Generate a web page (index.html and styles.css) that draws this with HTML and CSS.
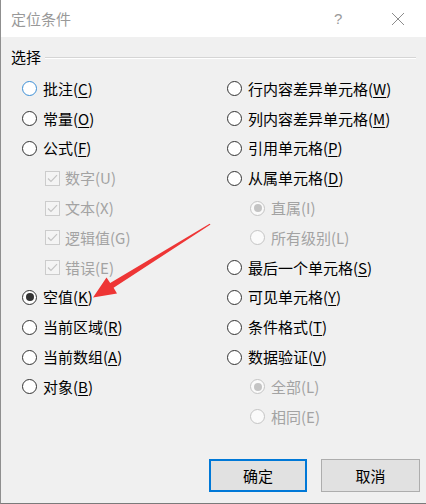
FILE: index.html
```html
<!DOCTYPE html>
<html lang="zh-CN">
<head>
<meta charset="utf-8">
<title>定位条件</title>
<link rel="stylesheet" href="styles.css">
</head>
<body>
<div class="window">
  <div class="titlebar">
    <span class="title">定位条件</span>
    <span class="help">?</span>
    <span class="close">
      <svg width="14" height="14" viewBox="0 0 14 14"><path d="M1 1 L13 13 M13 1 L1 13" stroke="#8c8c8c" stroke-width="1" fill="none"/></svg>
    </span>
  </div>
  <div class="content">
    <div class="group-label"><span>选择</span><div class="groove"></div></div>
    <div class="grid">
      <div class="col">
        <div class="row"><span class="radio focus"></span><span class="lbl">批注(<u>C</u>)</span></div>
        <div class="row"><span class="radio"></span><span class="lbl">常量(<u>O</u>)</span></div>
        <div class="row"><span class="radio"></span><span class="lbl">公式(<u>F</u>)</span></div>
        <div class="row sub"><span class="check"><svg width="15" height="15" viewBox="0 0 15 15"><path d="M3 7.5 L6 10.5 L12 4.2" stroke="#c4c4c4" stroke-width="1.2" fill="none"/></svg></span><span class="lbl dis">数字(U)</span></div>
        <div class="row sub"><span class="check"><svg width="15" height="15" viewBox="0 0 15 15"><path d="M3 7.5 L6 10.5 L12 4.2" stroke="#c4c4c4" stroke-width="1.2" fill="none"/></svg></span><span class="lbl dis">文本(X)</span></div>
        <div class="row sub"><span class="check"><svg width="15" height="15" viewBox="0 0 15 15"><path d="M3 7.5 L6 10.5 L12 4.2" stroke="#c4c4c4" stroke-width="1.2" fill="none"/></svg></span><span class="lbl dis">逻辑值(G)</span></div>
        <div class="row sub"><span class="check"><svg width="15" height="15" viewBox="0 0 15 15"><path d="M3 7.5 L6 10.5 L12 4.2" stroke="#c4c4c4" stroke-width="1.2" fill="none"/></svg></span><span class="lbl dis">错误(E)</span></div>
        <div class="row"><span class="radio on"></span><span class="lbl">空值(<u>K</u>)</span></div>
        <div class="row"><span class="radio"></span><span class="lbl">当前区域(<u>R</u>)</span></div>
        <div class="row"><span class="radio"></span><span class="lbl">当前数组(<u>A</u>)</span></div>
        <div class="row"><span class="radio"></span><span class="lbl">对象(<u>B</u>)</span></div>
      </div>
      <div class="col">
        <div class="row"><span class="radio"></span><span class="lbl">行内容差异单元格(<u>W</u>)</span></div>
        <div class="row"><span class="radio"></span><span class="lbl">列内容差异单元格(<u>M</u>)</span></div>
        <div class="row"><span class="radio"></span><span class="lbl">引用单元格(<u>P</u>)</span></div>
        <div class="row"><span class="radio"></span><span class="lbl">从属单元格(<u>D</u>)</span></div>
        <div class="row sub2"><span class="radio dis on"></span><span class="lbl dis">直属(I)</span></div>
        <div class="row sub2"><span class="radio dis"></span><span class="lbl dis">所有级别(L)</span></div>
        <div class="row"><span class="radio"></span><span class="lbl">最后一个单元格(<u>S</u>)</span></div>
        <div class="row"><span class="radio"></span><span class="lbl">可见单元格(<u>Y</u>)</span></div>
        <div class="row"><span class="radio"></span><span class="lbl">条件格式(<u>T</u>)</span></div>
        <div class="row"><span class="radio"></span><span class="lbl">数据验证(<u>V</u>)</span></div>
        <div class="row sub2"><span class="radio dis on"></span><span class="lbl dis">全部(L)</span></div>
        <div class="row sub2"><span class="radio dis"></span><span class="lbl dis">相同(E)</span></div>
      </div>
    </div>
  </div>
  <div class="footer">
    <button class="btn default">确定</button>
    <button class="btn">取消</button>
  </div>
  <svg class="arrow" width="426" height="504" viewBox="0 0 426 504">
    <polygon points="210.5,224.6 113.6,287.8 117,293.5 93,297.5 106.5,277.5 110.2,283 209.6,223.8" fill="#ee3535"/>
  </svg>
</div>
</body>
</html>
```
FILE: styles.css
```css
html, body {
  margin: 0;
  padding: 0;
  background: #f0f0f0;
}
body {
  font-family: "Noto Sans CJK SC", "Microsoft YaHei", sans-serif;
  font-size: 15px;
  color: #000;
}
.window {
  position: relative;
  width: 426px;
  height: 504px;
  box-sizing: border-box;
  border-left: 1px solid #8f8f8f;
  border-bottom: 1px solid #7a7a7a;
  background: #f0f0f0;
  display: flex;
  flex-direction: column;
}
.titlebar {
  height: 37px;
  background: #fff;
  display: flex;
  align-items: center;
  padding-left: 10px;
  flex: none;
}
.title {
  color: #999;
  font-size: 15px;
  line-height: 20px;
  flex: 1;
}
.help {
  color: #9a9a9a;
  font-family: "Liberation Sans", sans-serif;
  font-size: 15px;
  width: 14px;
  margin-right: 43px;
}
.close {
  width: 14px;
  height: 14px;
  margin-right: 21px;
  display: flex;
}
.content {
  padding-top: 10px;
}
.group-label {
  display: flex;
  align-items: center;
  padding-left: 10px;
  padding-right: 10px;
  height: 20px;
  line-height: 20px;
}
.groove {
  flex: 1;
  height: 0;
  border-top: 1px solid #d5d5d5;
  border-bottom: 1px solid #fff;
  margin-left: 4px;
  margin-top: 1px;
}
.grid {
  display: grid;
  grid-template-columns: 205px 1fr;
  padding-left: 21px;
  padding-top: 7px;
}
.col {
  display: flex;
  flex-direction: column;
}
.row {
  height: 29.8px;
  display: flex;
  align-items: center;
}
.row.sub {
  padding-left: 23px;
}
.row.sub2 {
  padding-left: 23px;
}
.lbl {
  line-height: 20px;
  margin-left: 6px;
  white-space: nowrap;
}
.lbl u {
  text-decoration-thickness: 1px;
  text-underline-offset: 2px;
}
.lbl.dis {
  color: #a3a3a3;
}
.row.sub .lbl {
  margin-left: 5px;
}
.radio {
  width: 15px;
  height: 15px;
  box-sizing: border-box;
  border: 1px solid #333;
  border-radius: 50%;
  background: #fff;
  position: relative;
  flex: none;
}
.radio.focus {
  border-color: #3c8fd6;
}
.radio.on::after {
  content: "";
  position: absolute;
  left: 2.5px;
  top: 2.5px;
  width: 8px;
  height: 8px;
  border-radius: 50%;
  background: #333;
}
.radio.dis {
  border-color: #c4c4c4;
  background: #fafafa;
}
.radio.dis.on::after {
  background: #c4c4c4;
}
.check {
  width: 15px;
  height: 15px;
  box-sizing: border-box;
  border: 1px solid #cccccc;
  background: #f4f4f4;
  display: flex;
  flex: none;
}
.check svg {
  margin: -1px;
}
.footer {
  margin-top: auto;
  display: flex;
  justify-content: flex-end;
  gap: 14px;
  padding-right: 6px;
  padding-bottom: 11px;
}
.btn {
  width: 99px;
  height: 33px;
  box-sizing: border-box;
  background: #e1e1e1;
  border: 1px solid #adadad;
  font-family: "Noto Sans CJK SC", sans-serif;
  font-size: 15px;
  color: #000;
  padding: 0;
  margin: 0;
  line-height: 20px;
}
.btn.default {
  width: 98px;
  border: 2px solid #0078d7;
}
.arrow {
  position: absolute;
  left: -1px;
  top: 0;
  pointer-events: none;
}
```
